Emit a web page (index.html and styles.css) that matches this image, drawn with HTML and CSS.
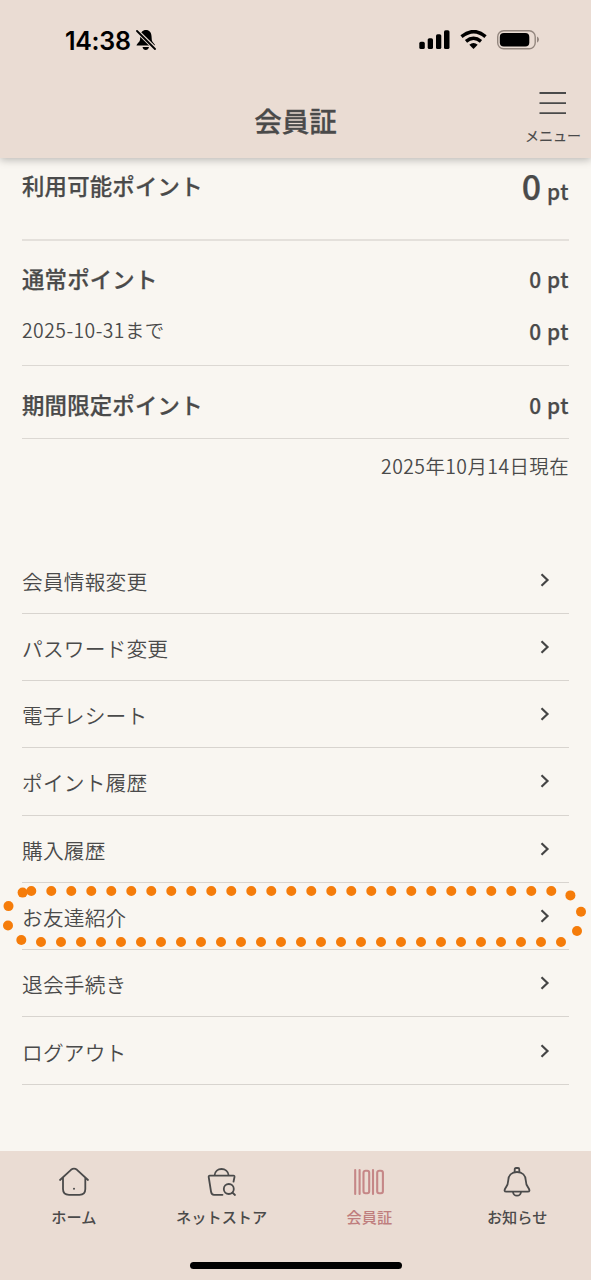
FILE: index.html
```html
<!DOCTYPE html>
<html lang="ja">
<head>
<meta charset="utf-8">
<title>会員証</title>
<link rel="stylesheet" href="styles.css">
</head>
<body>
<div class="screen">
  <header class="header">
    <div class="status">
      <span class="clock">14:38</span>
      <svg class="mute" width="20" height="22" viewBox="0 0 20 22">
        <path d="M10 1C6.500 1 4.500 3.500 4.300 7L4 11Q3.800 12.500 2 14Q.5 15.500.5 16.500H19Q19.200 15.500 17.500 14Q16 12.500 15.800 11L15.500 7C15.300 3.500 13.300 1 10 1Z"/>
        <path d="M6.500 18H13Q12.300 21 9.700 21Q7.200 21 6.500 18Z"/>
        <path class="mute-gap" d="M.5 1.500L19.500 20"/>
        <path class="mute-line" d="M1 2L19 20"/>
      </svg>
      <div class="signals">
        <svg width="32" height="20" viewBox="0 0 32 20">
          <rect x="0.300" y="11.800" width="5.500" height="7.200" rx="1.600"/><rect x="8.700" y="8.200" width="5.300" height="10.800" rx="1.600"/><rect x="17" y="4.200" width="5.300" height="14.800" rx="1.600"/><rect x="25" y="0.200" width="5.500" height="18.800" rx="1.600"/>
        </svg>
        <svg width="28" height="20" viewBox="0 0 28 20">
          <g class="wifi"><path d="M1.500 6.600Q14 -3.400 25.500 6.600"/><path d="M6 11.300Q13.500 5.300 21 11.300"/></g>
          <path d="M9.300 14.700Q13.500 11.400 17.700 14.700L13.500 19Z"/>
        </svg>
        <svg width="43" height="20" viewBox="0 0 43 20">
          <rect class="cell" x="0.700" y="0.700" width="37.500" height="18" rx="6"/><rect x="2.800" y="3" width="29.500" height="13.400" rx="4"/><path class="tip" d="M40 6.500Q42 7.500 42 9.600T40 12.800Z"/>
        </svg>
      </div>
    </div>
    <div class="titlebar">
      <h1 class="title">会員証</h1>
      <div class="menu">
        <svg width="28" height="24" viewBox="0 0 28 24"><path d="M.5 2H27M.5 12.200H27M.5 22.200H27"/></svg>
        <span>メニュー</span>
      </div>
    </div>
  </header>

  <main class="main">
    <section class="points">
      <div class="row total"><b class="label">利用可能ポイント</b><b class="value"><span class="big">0</span> pt</b></div>
      <div class="row normal"><b class="label">通常ポイント</b><b class="value">0 pt</b></div>
      <div class="row expiry"><span class="date">2025-10-31まで</span><b class="value">0 pt</b></div>
      <div class="row limited"><b class="label">期間限定ポイント</b><b class="value">0 pt</b></div>
      <p class="date asof">2025年10月14日現在</p>
    </section>
    <ul class="list">
      <li class="item"><span>会員情報変更</span><svg class="chev" viewBox="0 0 10 16"><path d="M1.500 2.300L7.500 8L1.500 13.700"/></svg></li>
      <li class="item"><span>パスワード変更</span><svg class="chev" viewBox="0 0 10 16"><path d="M1.500 2.300L7.500 8L1.500 13.700"/></svg></li>
      <li class="item"><span>電子レシート</span><svg class="chev" viewBox="0 0 10 16"><path d="M1.500 2.300L7.500 8L1.500 13.700"/></svg></li>
      <li class="item"><span>ポイント履歴</span><svg class="chev" viewBox="0 0 10 16"><path d="M1.500 2.300L7.500 8L1.500 13.700"/></svg></li>
      <li class="item"><span>購入履歴</span><svg class="chev" viewBox="0 0 10 16"><path d="M1.500 2.300L7.500 8L1.500 13.700"/></svg></li>
      <li class="item"><span>お友達紹介</span><svg class="chev" viewBox="0 0 10 16"><path d="M1.500 2.300L7.500 8L1.500 13.700"/></svg></li>
      <li class="item"><span>退会手続き</span><svg class="chev" viewBox="0 0 10 16"><path d="M1.500 2.300L7.500 8L1.500 13.700"/></svg></li>
      <li class="item"><span>ログアウト</span><svg class="chev" viewBox="0 0 10 16"><path d="M1.500 2.300L7.500 8L1.500 13.700"/></svg></li>
    </ul>
  </main>

  <nav class="nav">
    <div class="tabs">
      <div class="tab">
        <svg width="32" height="32" viewBox="0 0 32 32"><path d="M2 14L13 3.800Q16 1.500 19 3.800L30 14M5 11.500V23Q5 28.800 11 28.800H21.500Q27.300 28.800 27.300 23V11.500"/><circle class="dot" cx="16" cy="22.700" r="1"/></svg>
        <span>ホーム</span>
      </div>
      <div class="tab">
        <svg width="32" height="32" viewBox="0 0 32 32"><path d="M8.500 9.500C9 0.800 22 0.800 22.700 9.500M27.500 15.700L28.500 11Q28.700 9.700 27.500 9.700H3.800Q2.500 9.700 2.700 11L5 25.500Q5.500 28.800 8 28.800H16.500"/><circle cx="22.800" cy="23" r="5"/><path d="M26.300 26.500L29 29"/></svg>
        <span>ネットストア</span>
      </div>
      <div class="tab active">
        <svg width="32" height="32" viewBox="0 0 32 32"><path d="M2.200 4V28M6.600 4V28M20 4V28"/><rect x="10.500" y="4.700" width="5.700" height="22.600" rx="2"/><rect x="24.200" y="4.700" width="5.700" height="22.600" rx="2"/></svg>
        <span>会員証</span>
      </div>
      <div class="tab">
        <svg width="32" height="32" viewBox="0 0 32 32"><path d="M16 6C10.500 6 7.500 9.500 7.300 14C7.100 19 6.500 19.500 4.500 22Q2.300 25.700 5.300 25.700H26.700Q29.700 25.700 27.500 22C25.500 19.500 24.900 19 24.700 14C24.500 9.500 21.500 6 16 6Z"/><path d="M13.700 6V3.500Q13.700 2 15 2H17Q18.300 2 18.300 3.500V6M12 26Q12.500 29.700 16 29.700T20 26"/></svg>
        <span>お知らせ</span>
      </div>
    </div>
    <div class="home-bar"></div>
  </nav>

  <svg class="highlight" width="591" height="70" viewBox="0 0 591 70">
    <path d="M31.300 11H552"/><path d="M41 62H562"/>
    <g class="ends"><circle cx="22.600" cy="12.600" r="5"/><circle cx="8.500" cy="26.100" r="5"/><circle cx="8" cy="45.500" r="5"/><circle cx="21.300" cy="60" r="5"/><circle cx="570.400" cy="15.400" r="5"/><circle cx="581" cy="31.800" r="5"/><circle cx="577" cy="51" r="5"/></g>
  </svg>
</div>
</body>
</html>
```
FILE: styles.css
```css
* { box-sizing: border-box; }
body { margin: 0; font-family: "Noto Sans CJK JP", sans-serif; color: #4a4a4a; background: #f9f6f1; }
svg { display: block; }
.screen { position: relative; width: 591px; height: 1280px; display: flex; flex-direction: column; overflow: hidden; }
.header { height: 158px; flex: none; background: #eadcd3; box-shadow: 0 2px 8px rgba(0,0,0,.25); }
.status { height: 80px; display: flex; align-items: center; padding: 0 51px 0 65px; color: #000; }
.clock { width: 70px; padding-top: 1px; font: 600 25px/30px Inter, sans-serif; letter-spacing: -.3px; }
.mute { margin-left: 1px; }
.mute-gap { stroke: #eadcd3; stroke-width: 4; }
.mute-line { stroke: #000; stroke-width: 1.8; stroke-linecap: round; }
.signals { margin-left: auto; display: flex; gap: 9px; }
.wifi { fill: none; stroke: #000; stroke-width: 3.5; }
.cell { fill: none; stroke: #94877f; stroke-width: 1.4; }
.tip { fill: #94877f; }
.titlebar { height: 78px; display: grid; grid-template-columns: 1fr auto 1fr; }
.title { grid-column: 2; margin: 20px 0 0; font-size: 27.5px; line-height: 40px; font-weight: 500; -webkit-text-stroke: .3px; }
.menu { justify-self: end; width: 56px; margin-right: 10px; padding-top: 11px; display: flex; flex-direction: column; align-items: center; font-size: 14px; line-height: 20px; font-weight: 400; -webkit-text-stroke: .2px; white-space: nowrap; }
.menu svg { fill: none; stroke: #4a4a4a; stroke-width: 1.8; margin-bottom: 10px; }
.main { flex: 1; padding: 0 22px; }
.points { height: 388px; }
.row { display: flex; align-items: center; justify-content: space-between; line-height: 32px; }
.label { padding-bottom: 2px; font-size: 22.4px; letter-spacing: .2px; font-weight: 500; -webkit-text-stroke: .25px; }
.value { font-size: 20.8px; letter-spacing: .6px; font-weight: 500; -webkit-text-stroke: .25px; }
.total { height: 83px; padding-bottom: 26px; align-items: center; border-bottom: 2px solid #e4e0db; }
.total .value { padding-top: 5px; }
.big { font-size: 34px; }
.normal { height: 77px; padding-bottom: 2px; }
.expiry { height: 48px; padding-bottom: 22px; border-bottom: 1px solid #dcd8d3; }
.expiry .date { padding-bottom: 2px; }
.limited { height: 73px; padding-top: 5px; border-bottom: 1px solid #dcd8d3; }
.date { font-size: 19.4px; letter-spacing: .45px; font-weight: 350; }
.asof { margin: 13px 0 0; line-height: 28px; text-align: right; }
.list { margin: 0; padding: .4px 0 0; list-style: none; }
.item { height: 67.3px; display: flex; align-items: center; justify-content: space-between; padding-right: 19px; border-bottom: 1px solid #d8d4cf; font-size: 20.7px; letter-spacing: .2px; font-weight: 350; }
.item span { padding-top: 2px; line-height: 30px; }
.chev { width: 10px; height: 16px; fill: none; stroke: #454545; stroke-width: 2.2; }
.nav { height: 129px; flex: none; background: #eadcd3; }
.tabs { height: 111px; display: grid; grid-template-columns: repeat(4, 1fr); }
.tab { display: flex; flex-direction: column; align-items: center; padding-top: 15px; font-size: 15.2px; line-height: 22px; font-weight: 500; }
.tab svg { margin-bottom: 7px; fill: none; stroke: #4a4a4a; stroke-width: 1.8; stroke-linecap: round; stroke-linejoin: round; }
.tab .dot { fill: #4a4a4a; stroke: none; }
.active { color: #bf7e7e; }
.tabs .active svg { stroke: #c58787; stroke-width: 2.1; }
.home-bar { width: 212px; height: 7px; margin: 0 auto; border-radius: 4px; background: #000; }
.highlight { position: absolute; left: 0; top: 880px; fill: none; stroke: #f57c0a; stroke-width: 10; stroke-linecap: round; stroke-dasharray: 0 20; pointer-events: none; }
.ends { fill: #f57c0a; stroke: none; }
```
